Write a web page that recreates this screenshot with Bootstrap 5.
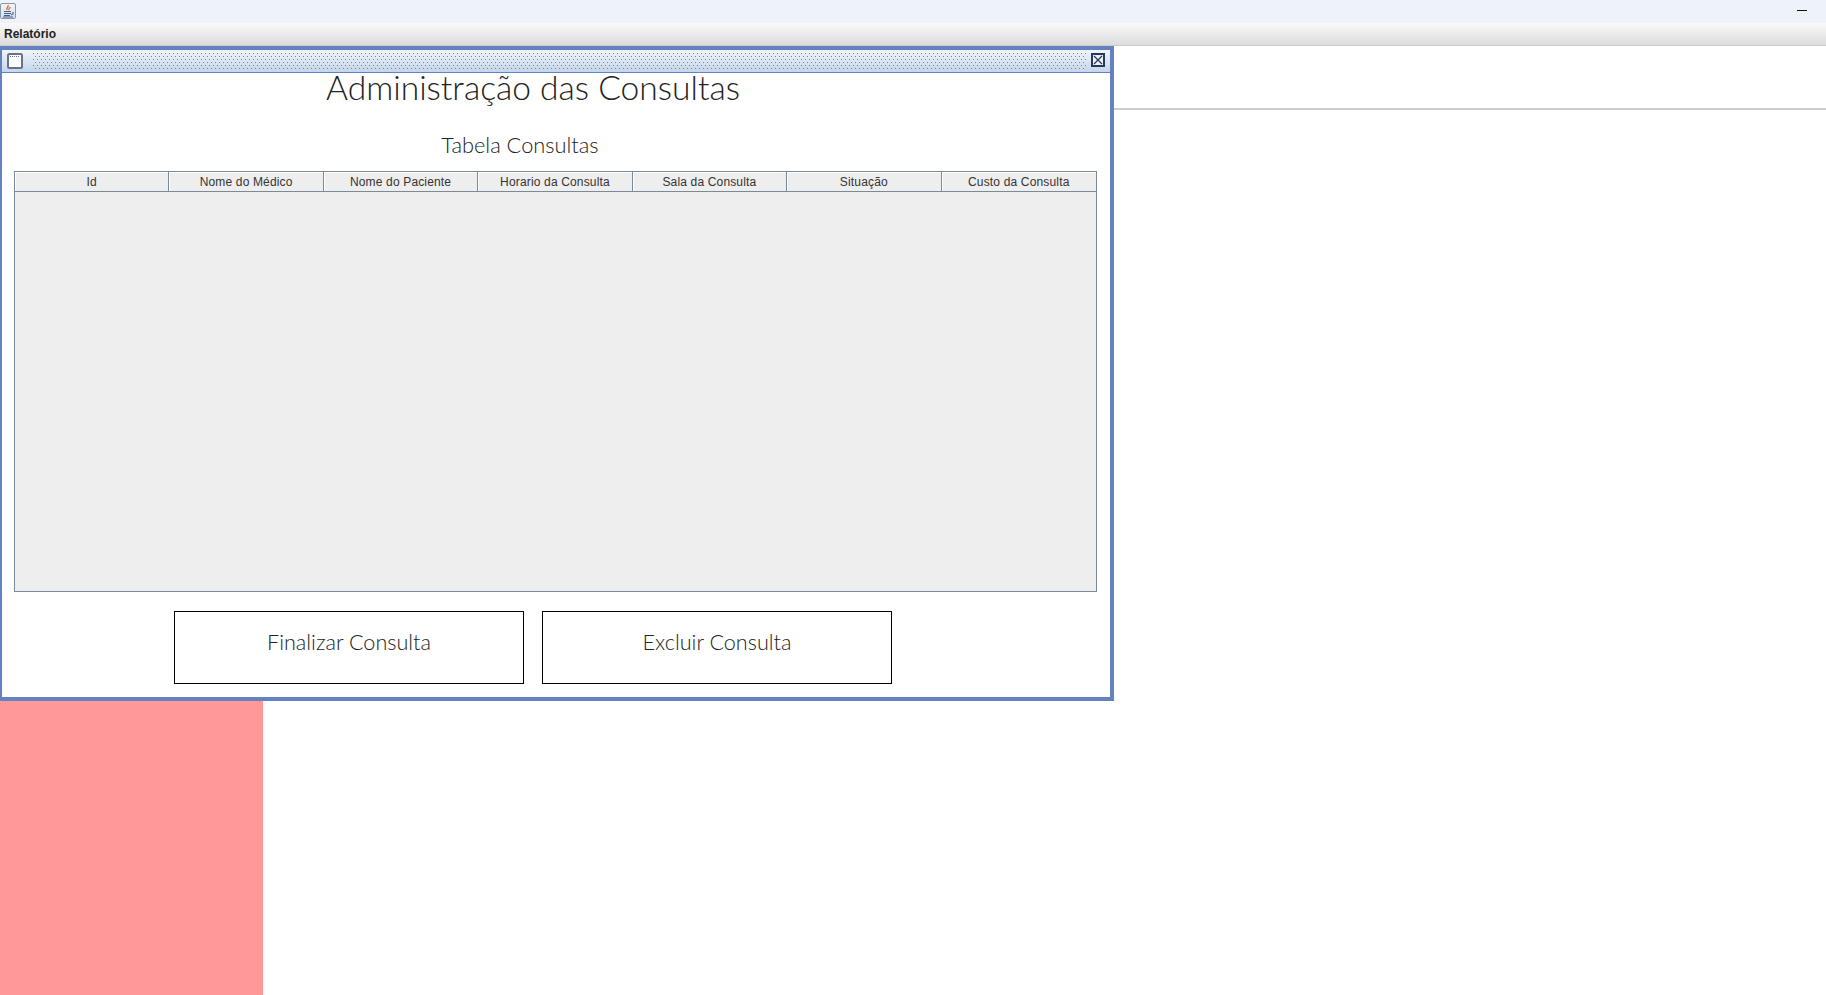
<!doctype html>
<html lang="pt-BR">
<head>
    <meta charset="utf-8">
    <title>Relatório</title>
    <meta name="viewport" content="width=device-width, initial-scale=1">
    <link href="https://cdn.jsdelivr.net/npm/bootstrap@5.3.0/dist/css/bootstrap.min.css" rel="stylesheet">
    <style>
        html, body { height: 100%; overflow: hidden; }
        body { font-family: "Liberation Sans", Arial, sans-serif; background: #fff; color: #333; }
        .os-bar { height: 23px; background: #eef3fa; }
        .app-btn { width: 16px; height: 16px; margin-top: 3px; background: linear-gradient(#f2f5f9, #d5deea); border: 1px solid #8b98a8; border-radius: 2px; }
        .min-mark { width: 10px; height: 1px; background: #111; margin: 10px 19px 0 0; }
        .menu-strip { height: 23px; padding-left: 4px; font-size: 12px; font-weight: 700; line-height: 23px; color: #222; background: linear-gradient(#fafafa, #dcdcdc); border-bottom: 1px solid #ccc; }
        .desk { position: relative; height: 949px; }
        .top-panel { height: 64px; border-bottom: 2px solid #ccc; }
        .side-panel { width: 263px; height: 885px; background: #ff9999; }
        .int-window { position: absolute; left: 0; top: 0; width: 1114px; height: 655px; background: #fff; border: solid #6382bf; border-width: 4px 4px 4px 2px; }
        .win-title { height: 23px; padding: 3px 5px 0 5px; border-bottom: 1px solid #6382bf; background: linear-gradient(#f0f5fb, #c4d6ea); }
        .win-dots { height: 16px; margin: 0 5px 0 10px; background-image: radial-gradient(circle at .5px .5px, #6382bf .7px, transparent .71px), radial-gradient(circle at 2.5px 3.5px, #6382bf .7px, transparent .71px); background-size: 4px 6px; }
        .head-one, .head-two { font-family: Lato, "Open Sans", sans-serif; font-weight: 300; color: #222; text-align: center; margin: 0; }
        .head-one { font-size: 33.6px; line-height: 29px; padding: 0 46px 0 0; }
        .head-two { font-size: 21.8px; line-height: 26px; padding: 30px 72px 0 0; }
        .grid-box { margin: 13px 13px 0 12px; height: 421px; background: #eee; border: 1px solid #7a8a99; border-top: 0; }
        .grid-table { table-layout: fixed; width: 100%; border-collapse: separate; border-spacing: 0; }
        .grid-table th { height: 21px; padding: 2px 0 0; font-size: 12px; font-weight: 400; letter-spacing: .16px; line-height: 17px; color: #333; text-align: center; background: #eee; border-top: 1px solid #7a8a99; border-bottom: 1px solid #7a8a99; border-right: 1px solid #7a8a99; box-shadow: inset 1px 1px 0 #fff; }
        .grid-table th:last-child { border-right: 0; }
        .act-row { margin: 19px 0 0 172px; gap: 18px; }
        .act-btn { width: 350px; height: 73px; padding: 0 0 10px; font-family: Lato, "Open Sans", sans-serif; font-weight: 300; font-size: 21.6px; color: #222; background: #fff; border: 1px solid #000; border-radius: 0; }
    </style>
</head>
<body>
    <div class="os-bar d-flex justify-content-between">
        <div class="app-btn d-flex align-items-center justify-content-center">
            <svg width="14" height="14" viewBox="0 0 14 14">
                <path d="M7 1c1 2-2 3-1 5M9 3c0 2-2 2-1 3" fill="none" stroke="#e0702a" stroke-width="1.400"/>
                <path d="M3 7.500h7M3 9.500h7M12 8v2l-2 1" fill="none" stroke="#3f5f8f" stroke-width="1.100"/>
                <path d="M3 11.500h6M2 13h10" stroke="#3f5f8f"/>
            </svg>
        </div>
        <div class="min-mark"></div>
    </div>
    <div class="menu-strip">Relatório</div>

    <div class="desk">
        <div class="top-panel"></div>
        <div class="side-panel"></div>

        <div class="int-window">
            <div class="win-title d-flex">
                <svg width="16" height="16" viewBox="0 0 16 16" class="flex-shrink-0">
                    <rect x="1" y="1" width="14" height="14" rx="1.500" fill="#fff" stroke="#667388" stroke-width="2"/>
                    <path d="M3 3.500h10" stroke="#667388" stroke-dasharray="1 1"/>
                </svg>
                <div class="win-dots flex-grow-1"></div>
                <svg width="14" height="14" viewBox="0 0 14 14" class="flex-shrink-0">
                    <rect x="1" y="1" width="12" height="12" fill="#eaf1f9" stroke="#27385a" stroke-width="2"/>
                    <path d="M3 3l8 8M11 3l-8 8" stroke="#27385a" stroke-width="1.200"/>
                </svg>
            </div>
            <h1 class="head-one">Administração das Consultas</h1>
            <h2 class="head-two">Tabela Consultas</h2>
            <div class="grid-box">
                <table class="grid-table">
                    <thead>
                        <tr>
                            <th>Id</th>
                            <th>Nome do Médico</th>
                            <th>Nome do Paciente</th>
                            <th>Horario da Consulta</th>
                            <th>Sala da Consulta</th>
                            <th>Situação</th>
                            <th>Custo da Consulta</th>
                        </tr>
                    </thead>
                </table>
            </div>
            <div class="act-row d-flex">
                <button type="button" class="btn act-btn">Finalizar Consulta</button>
                <button type="button" class="btn act-btn">Excluir Consulta</button>
            </div>
        </div>
    </div>

    <script src="https://cdn.jsdelivr.net/npm/bootstrap@5.3.0/dist/js/bootstrap.bundle.min.js"></script>
</body>
</html>
